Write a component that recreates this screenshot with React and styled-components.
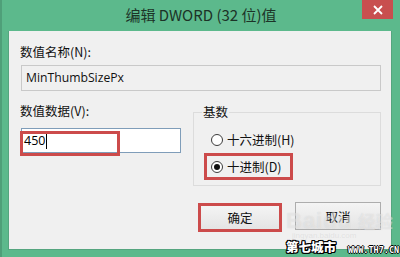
import React from "react";
import styled, { createGlobalStyle } from "styled-components";

const Global = createGlobalStyle`
  html, body { margin: 0; padding: 0; background: #5cb98c; }
  body { width: 400px; height: 257px; overflow: hidden; }
  * { box-sizing: border-box; }
`;

const FONT = `"Noto Sans CJK SC", "Noto Sans", "Liberation Sans", sans-serif`;

const Window = styled.div`
  position: relative;
  width: 400px;
  height: 257px;
  background: #5cb98c;
  border-left: 2px solid #4f9f79;
  display: flex;
  flex-direction: column;
  font-family: ${FONT};
  color: #111;
`;

const TitleBar = styled.div`
  height: 31px;
  display: grid;
  grid-template-columns: 1fr auto 1fr;
  align-items: start;
`;

const Title = styled.div`
  grid-column: 2;
  font-size: 15px;
  line-height: 20px;
  padding-top: 5px;
  color: #1c3327;
  white-space: nowrap;
`;

const Close = styled.div`
  grid-column: 3;
  justify-self: end;
  margin-right: 7px;
  width: 31px;
  height: 19px;
  background: #c84f4f;
  display: flex;
  align-items: center;
  justify-content: center;
`;

const Panel = styled.div`
  margin-left: 6px;
  width: 384px;
  height: 219px;
  background: #f0f0f0;
  border: 1px solid #55a57f;
  border-top: none;
  padding: 13px 10px 0 11px;
  display: flex;
  flex-direction: column;
`;

const Label = styled.div`
  font-size: 12.5px;
  line-height: 16px;
  white-space: nowrap;
`;

const ReadField = styled.div`
  margin-top: 5px;
  margin-left: 1px;
  height: 26px;
  width: 360px;
  border: 1px solid #c9c9c9;
  background: #f0f0f0;
  font-size: 12.2px;
  line-height: 24px;
  padding-left: 4px;
  font-family: "Open Sans", "Noto Sans", sans-serif;
  color: #111;
`;

const Row = styled.div`
  margin-top: 12px;
  display: flex;
  align-items: flex-start;
  gap: 12px;
`;

const Col = styled.div`
  display: flex;
  flex-direction: column;
  width: 161px;
`;

const InputWrap = styled.div`
  position: relative;
  margin-top: 9px;
  margin-left: 1px;
  width: 160px;
  height: 25px;
  border: 1px solid #7f9db9;
  background: #fff;
  display: flex;
  align-items: center;
  padding-left: 2px;
  font-size: 12.5px;
  font-family: "Open Sans", "Noto Sans", sans-serif;
  color: #000;
`;

const Caret = styled.span`
  display: inline-block;
  width: 1px;
  height: 16px;
  background: #000;
  margin-left: 1px;
`;

const Highlight = styled.div`
  position: absolute;
  left: -2px;
  top: 2px;
  width: 100px;
  height: 25px;
  border: 3px solid #cc4b4b;
`;

const Group = styled.div`
  position: relative;
  margin-top: 9px;
  width: 190px;
  height: 74px;
  border: 1px solid #dcdcdc;
  padding: 13px 0 0 10px;
  display: flex;
  flex-direction: column;
  align-items: flex-start;
`;

const Legend = styled.span`
  position: absolute;
  left: 8px;
  top: -9px;
  padding: 0 1px;
  background: #f0f0f0;
  font-size: 12.5px;
  line-height: 16px;
`;

const RadioRow = styled.div`
  height: 27px;
  display: inline-flex;
  align-items: center;
  gap: 4px;
  padding: 0 8px 0 4px;
  border: 3px solid ${(p) => (p.$marked ? "#cc4b4b" : "transparent")};
  font-size: 12.5px;
  white-space: nowrap;
`;

const Circle = styled.span`
  width: 12px;
  height: 12px;
  border-radius: 50%;
  border: 1px solid #3c3c3c;
  background: #fff;
  display: flex;
  align-items: center;
  justify-content: center;
  &::after {
    content: "";
    width: 6px;
    height: 6px;
    border-radius: 50%;
    background: ${(p) => (p.$on ? "#111" : "transparent")};
  }
`;

const Buttons = styled.div`
  margin-top: 16px;
  display: flex;
  justify-content: flex-end;
  align-items: flex-start;
  gap: 13px;
`;

const Button = styled.div`
  width: ${(p) => (p.$marked ? 84 : 86)}px;
  height: ${(p) => (p.$marked ? 29 : 28)}px;
  margin-top: ${(p) => (p.$marked ? 1 : 0)}px;
  border: ${(p) => (p.$marked ? "3px solid #cc4b4b" : "1px solid #adadad")};
  background: linear-gradient(#f4f4f4, #e4e4e4);
  display: flex;
  align-items: center;
  justify-content: center;
  font-size: 12.5px;
  color: #111;
`;

const Baidu = styled.div`
  position: absolute;
  left: 284px;
  top: 208px;
  font-family: "Liberation Sans", sans-serif;
  font-weight: bold;
  font-size: 22px;
  letter-spacing: 1px;
  color: rgba(255, 255, 255, 0.35);
  text-shadow: 0 0 1px rgba(170, 170, 170, 0.35);
  white-space: nowrap;
  span { font-family: ${FONT}; font-size: 17px; margin-left: 6px; }
`;

const BaiduSmall = styled.div`
  position: absolute;
  left: 290px;
  top: 231px;
  font-family: "Liberation Sans", sans-serif;
  font-size: 8px;
  color: rgba(190, 190, 190, 0.3);
  white-space: nowrap;
`;

const Stamp = styled.div`
  position: absolute;
  left: 284px;
  top: 239px;
  font-size: 12.5px;
  line-height: 15px;
  font-weight: 900;
  color: #fff;
  text-shadow: 1px 0 0 #000, -1px 0 0 #000, 0 1px 0 #000, 0 -1px 0 #000,
    1px 1px 0 #000, -1px -1px 0 #000, 1px -1px 0 #000, -1px 1px 0 #000;
  white-space: nowrap;
`;

const StampUrl = styled.div`
  position: absolute;
  left: 346px;
  top: 245px;
  font-family: "DejaVu Sans Mono", monospace;
  font-size: 8.5px;
  line-height: 10px;
  font-weight: bold;
  color: #fff;
  text-shadow: 1px 0 0 #000, -1px 0 0 #000, 0 1px 0 #000, 0 -1px 0 #000;
  white-space: nowrap;
`;

export default function App() {
  return (
    <>
      <Global />
      <Window>
        <TitleBar>
          <Title>编辑 DWORD (32 位)值</Title>
          <Close>
            <svg width="10" height="10" viewBox="0 0 10 10">
              <path d="M1 1 L9 9 M9 1 L1 9" stroke="#fff" strokeWidth="1.8" />
            </svg>
          </Close>
        </TitleBar>
        <Panel>
          <Label>数值名称(N):</Label>
          <ReadField>MinThumbSizePx</ReadField>
          <Row>
            <Col>
              <Label>数值数据(V):</Label>
              <InputWrap>
                450
                <Caret />
                <Highlight />
              </InputWrap>
            </Col>
            <Group>
              <Legend>基数</Legend>
              <RadioRow>
                <Circle />
                十六进制(H)
              </RadioRow>
              <RadioRow $marked>
                <Circle $on />
                十进制(D)
              </RadioRow>
            </Group>
          </Row>
          <Buttons>
            <Button $marked>确定</Button>
            <Button>取消</Button>
          </Buttons>
        </Panel>
        <Baidu>
          Baidu<span>经验</span>
        </Baidu>
        <BaiduSmall>jingyan.baidu.com</BaiduSmall>
        <Stamp>第七城市</Stamp>
        <StampUrl>WWW.TH7.CN</StampUrl>
      </Window>
    </>
  );
}
